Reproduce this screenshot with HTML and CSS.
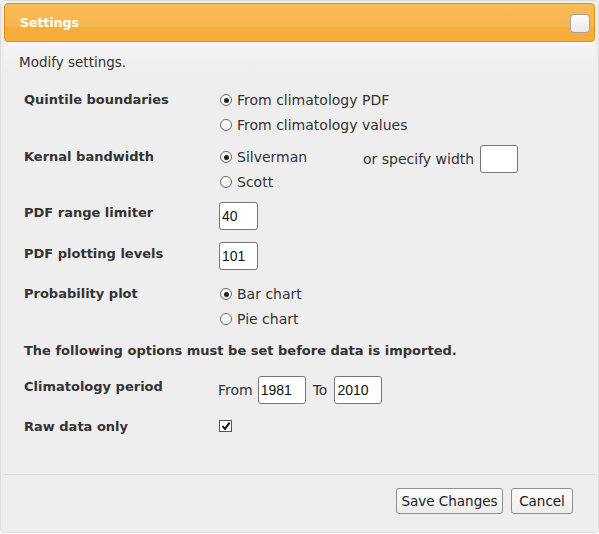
FILE: index.html
```
<!DOCTYPE html>
<html>
<head>
<meta charset="utf-8">
<link rel="stylesheet" href="styles.css">
</head>
<body>
<div class="dialog">
  <div class="titlebar">
    <span class="title">Settings</span>
    <span class="close"></span>
  </div>
  <div class="content">
    <p class="intro">Modify settings.</p>
    <div class="row r-quint">
      <div class="label">Quintile boundaries</div>
      <div class="options radios">
        <label class="opt"><span class="radio on"></span>From climatology PDF</label>
        <label class="opt"><span class="radio"></span>From climatology values</label>
      </div>
    </div>
    <div class="row r-kern">
      <div class="label">Kernal bandwidth</div>
      <div class="options radios">
        <label class="opt"><span class="radio on"></span>Silverman</label>
        <label class="opt"><span class="radio"></span>Scott</label>
      </div>
      <div class="specify">or specify width <span class="input w-spec"></span></div>
    </div>
    <div class="row r-range">
      <div class="label">PDF range limiter</div>
      <div class="options"><span class="input w-small">40</span></div>
    </div>
    <div class="row r-levels">
      <div class="label">PDF plotting levels</div>
      <div class="options"><span class="input w-small">101</span></div>
    </div>
    <div class="row r-prob">
      <div class="label">Probability plot</div>
      <div class="options radios">
        <label class="opt"><span class="radio on"></span>Bar chart</label>
        <label class="opt"><span class="radio"></span>Pie chart</label>
      </div>
    </div>
    <p class="notice">The following options must be set before data is imported.</p>
    <div class="row r-clim">
      <div class="label">Climatology period</div>
      <div class="options period"><span>From</span><span class="input w-year y1">1981</span><span class="to">To</span><span class="input w-year y2">2010</span></div>
    </div>
    <div class="row r-raw">
      <div class="label">Raw data only</div>
      <div class="options"><span class="check"><svg width="12" height="12" viewBox="0 0 12 12"><path d="M2.6 6.2 L5 8.9 L9.6 2.6" fill="none" stroke="#111" stroke-width="1.9"/></svg></span></div>
    </div>
  </div>
  <div class="buttonpane">
    <span class="btn btn-save">Save Changes</span>
    <span class="btn btn-cancel">Cancel</span>
  </div>
</div>
</body>
</html>
```
FILE: styles.css
```
html, body { margin: 0; padding: 0; }
body {
  background: #ffffff;
  font-family: "DejaVu Sans", sans-serif;
  font-size: 13px;
  color: #333;
}
.dialog {
  width: 599px;
  height: 533px;
  box-sizing: border-box;
  border: 1px solid #dddddd;
  border-radius: 4px;
  background: #eeeeee;
  padding: 2px 3px 0 3px;
  display: flex;
  flex-direction: column;
}
.titlebar {
  height: 39px;
  flex: none;
  box-sizing: border-box;
  border: 1px solid #e78f08;
  border-radius: 4px;
  background: linear-gradient(to bottom, #f8bb58 0%, #f7b54d 62%, #f6ae3b 64%, #f6ae3b 100%);
  display: flex;
  align-items: center;
  justify-content: space-between;
  padding: 0 4px 0 15px;
}
.title {
  color: #fff;
  font-weight: bold;
  font-size: 12.5px;
}
.close {
  width: 18px;
  height: 17px;
  border: 1px solid #a9a29a;
  border-radius: 4px;
  background: linear-gradient(#fdfdfd, #e8e8e8);
  margin-top: 2px;
}
.content {
  flex: 1;
  background: linear-gradient(#f5f5f5, #eeeeee 30px);
  padding: 0 0 0 20px;
}
.intro {
  margin: 12px 0 0 -5px;
  line-height: 16px;
  font-size: 13.5px;
}
.row {
  display: flex;
  align-items: flex-start;
}
.label {
  width: 196px;
  flex: none;
  font-weight: bold;
  line-height: 16px;
  padding-top: 1px;
}
.options {
  display: flex;
  flex-direction: column;
  gap: 9px;
  font-size: 14px;
}
.radios { padding-top: 1px; }
.opt {
  display: flex;
  align-items: center;
  line-height: 16px;
}
.radio {
  width: 12px;
  height: 12px;
  box-sizing: border-box;
  border: 1px solid #6a6a6a;
  border-radius: 50%;
  background: linear-gradient(#ffffff, #f0f0f0);
  margin-right: 5px;
  position: relative;
}
.radio.on::after {
  content: "";
  position: absolute;
  left: 2.5px; top: 2.5px;
  width: 5px; height: 5px;
  border-radius: 50%;
  background: #222;
}
.r-kern .options { width: 143px; flex: none; }
.specify {
  display: flex;
  align-items: center;
  margin-top: -3px;
  font-size: 14px;
}
.input {
  display: inline-block;
  box-sizing: border-box;
  height: 28px;
  border: 1px solid #767676;
  border-radius: 3px;
  background: #fff;
  line-height: 26px;
  padding-left: 2px;
  color: #111;
  font-family: "Liberation Sans", sans-serif;
  font-size: 14px;
}
.w-spec { width: 38px; margin-left: 6px; }
.w-small { width: 39px; margin-left: -1px; }
.w-year { width: 48px; }
.r-quint { margin-top: 21px; }
.r-kern { margin-top: 15px; }
.r-range { margin-top: 12px; }
.r-range .label { margin-top: 2px; }
.r-levels { margin-top: 12px; }
.r-levels .label { margin-top: 3px; }
.r-prob { margin-top: 15px; }
.notice {
  margin: 15px 0 0 0;
  padding-top: 1px;
  font-weight: bold;
  line-height: 16px;
}
.r-clim { margin-top: 17px; }
.r-clim .label { margin-top: 2px; }
.r-clim .options {
  flex-direction: row;
  align-items: center;
  gap: 0;
  margin-left: -2px;
  line-height: 16px;
}
.period .y1 { margin-left: 5px; }
.period .to { margin-left: 7px; margin-right: 7px; }
.r-raw { margin-top: 14px; }
.check {
  display: block;
  width: 13px; height: 12px;
  box-sizing: border-box;
  border: 1px solid #555;
  background: #fff;
  margin-top: 2px;
  margin-left: -1px;
}
.check svg { display: block; margin: -1px 0 0 -0.5px; }
.buttonpane {
  height: 58px;
  flex: none;
  border-top: 1px solid #dddddd;
  display: flex;
  justify-content: flex-end;
  align-items: flex-start;
  gap: 8px;
  padding: 13px 22px 0 0;
  box-sizing: border-box;
}
.btn {
  display: inline-block;
  height: 26px;
  box-sizing: border-box;
  border: 1px solid #8f8f8f;
  border-radius: 3px;
  background: linear-gradient(#fdfdfd, #ececec);
  line-height: 24px;
  text-align: center;
  font-size: 13.5px;
  color: #222;
}
.btn-save { width: 107px; }
.btn-cancel { width: 62px; }
```
